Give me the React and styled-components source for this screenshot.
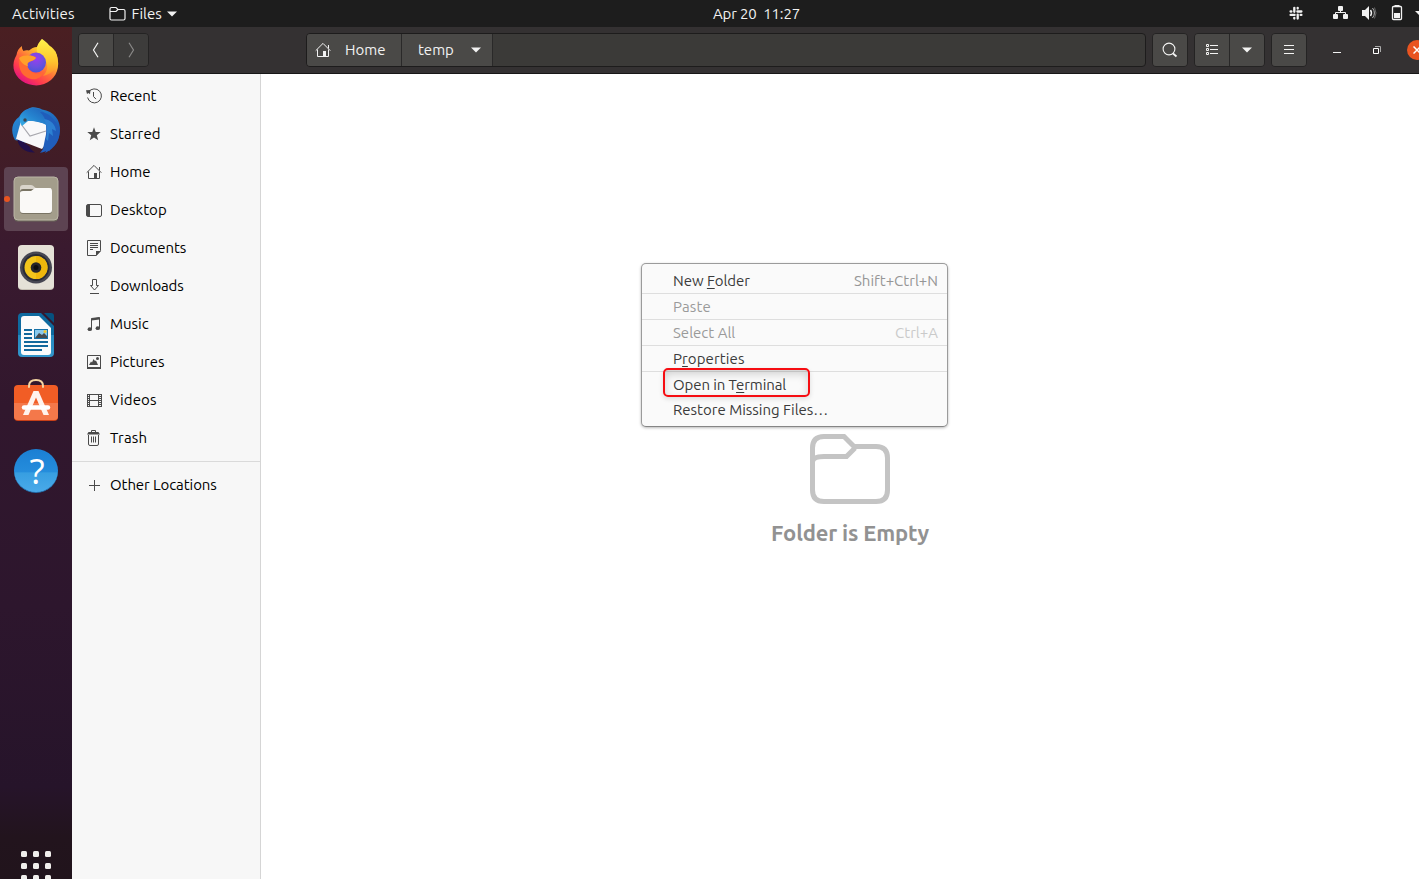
import React from "react";
import styled, { createGlobalStyle } from "styled-components";

const GlobalStyle = createGlobalStyle`
  * { box-sizing: border-box; }
  html, body { margin: 0; overflow: hidden; }
  body { font-family: Ubuntu, "Noto Sans", sans-serif; font-size: 15px; background: #fff; }
  svg { display: block; flex: none; }
`;

const Screen = styled.div`
  width: 1419px;
  height: 879px;
  display: flex;
  flex-direction: column;
  overflow: hidden;
  position: relative;
`;

const Text = styled.span`
  white-space: pre;
  letter-spacing: ${(p) => p.$ls || 0}px;
`;

const Label = styled(Text)`
  padding-bottom: 2px;
`;

const TopBar = styled.header`
  height: 27px;
  flex: none;
  background: #1d1d1d;
  color: #f2f2f2;
  display: grid;
  grid-template-columns: 1fr auto 1fr;
  align-items: center;
`;

const TopLeft = styled.div`
  display: flex;
  align-items: center;
  padding-left: 12px;
`;

const AppMenu = styled.div`
  display: flex;
  align-items: center;
  gap: 5px;
  margin-left: 34px;
`;

const Clock = styled.div`
  width: 87px;
  margin-left: 94px;
`;

const Tray = styled.div`
  display: flex;
  align-items: center;
  justify-content: flex-end;
`;

const Body = styled.div`
  flex: 1;
  min-height: 0;
  display: flex;
`;

const Dock = styled.nav`
  width: 72px;
  flex: none;
  display: flex;
  flex-direction: column;
  align-items: center;
  gap: 4px;
  padding-top: 4px;
  overflow: hidden;
  background: linear-gradient(#4a1f22 0, #421d26 120px, #3a1a2f 220px, #31172d 380px, #2d162d 580px, #26142a 760px, #22141d 810px, #21141c 100%);
`;

const DockItem = styled.div`
  width: 64px;
  height: 64px;
  flex: none;
  border-radius: 4px;
  background: ${(p) => (p.$active ? "#5d4352" : "transparent")};
`;

const AppsGrid = styled.div`
  display: grid;
  grid-template-columns: repeat(3, 6px);
  grid-auto-rows: 6px;
  gap: 6px;
  margin-top: 344px;
`;

const Dot = styled.i`
  background: #f1efec;
  border-radius: 1.5px;
`;

const Window = styled.section`
  width: 1367px;
  flex: none;
  display: flex;
  flex-direction: column;
`;

const HeaderBar = styled.div`
  height: 47px;
  flex: none;
  display: flex;
  align-items: center;
  padding: 0 12px 0 6px;
  background: #343132;
  border-bottom: 1px solid #171717;
  color: #f2f2f2;
`;

const ButtonGroup = styled.div`
  display: flex;
  height: 34px;
  border: 1px solid #242323;
  border-radius: 4px;
  overflow: hidden;
  margin-left: ${(p) => p.$ml || 0}px;
`;

const HeaderButton = styled.div`
  width: ${(p) => p.$w || 34}px;
  display: flex;
  align-items: center;
  justify-content: center;
  background: ${(p) => (p.$dim ? "#3d3c3b" : "#4a4947")};
  color: ${(p) => (p.$dim ? "#898887" : "#f4f4f3")};
  & + & { border-left: 1px solid #282727; }
`;

const PathBar = styled.div`
  width: 840px;
  height: 34px;
  margin-left: 157px;
  flex: none;
  display: flex;
  overflow: hidden;
  background: #3b3a38;
  border: 1px solid #1d1c1c;
  border-radius: 4px;
`;

const Crumb = styled.div`
  display: flex;
  align-items: center;
  gap: ${(p) => p.$gap}px;
  width: ${(p) => p.$w}px;
  padding-left: ${(p) => p.$pl}px;
  background: #4a4947;
  border-right: 1px solid #2a2929;
`;

const WindowControls = styled.div`
  display: flex;
  align-items: center;
  gap: 24px;
  margin-left: 22px;
`;

const Panes = styled.div`
  flex: 1;
  min-height: 0;
  display: flex;
`;

const Sidebar = styled.aside`
  width: 189px;
  flex: none;
  background: #f7f7f7;
  border-right: 1px solid #d5d5d5;
  padding-top: 3px;
  color: #000;
`;

const Place = styled.div`
  display: flex;
  align-items: center;
  gap: 8px;
  height: 38px;
  padding-left: 14px;
  svg { color: #4a4a4a; }
`;

const Divider = styled.div`
  height: 1px;
  margin: 4px 0;
  background: #dadada;
`;

const Content = styled.main`
  flex: 1;
  background: #fff;
  display: flex;
  flex-direction: column;
  align-items: center;
  padding-top: 360px;
`;

const EmptyTitle = styled.h2`
  margin: 14px 0 0;
  font-size: 22px;
  line-height: 30px;
  font-weight: 700;
  color: #929292;
  letter-spacing: -0.18px;
  white-space: nowrap;
`;

const ContextMenu = styled.div`
  position: absolute;
  left: 641px;
  top: 263px;
  width: 307px;
  height: 164px;
  padding: 4px 0;
  background: #fafafa;
  border: 1px solid #9b9b9b;
  border-bottom-color: #858585;
  border-radius: 5px;
  box-shadow: 0 1px 3px rgba(0, 0, 0, 0.28);
`;

const MenuRow = styled.div`
  display: flex;
  align-items: center;
  justify-content: space-between;
  height: ${(p) => (p.$line ? 26 : 25)}px;
  padding: 1px 9px 0 31px;
  border-bottom: ${(p) => (p.$line ? "1px solid #dedede" : "0")};
  color: ${(p) => (p.$off ? "#9a9a9a" : "#3b3b3b")};
  u { text-underline-offset: 2px; text-decoration-thickness: 1px; text-decoration-skip-ink: none; }
`;

const Shortcut = styled(Label)`
  color: ${(p) => (p.$off ? "#cacaca" : "#969696")};
`;

const Highlight = styled.div`
  position: absolute;
  left: 21px;
  top: 104px;
  width: 147px;
  height: 29px;
  border: 2px solid #f60d12;
  border-radius: 5px;
  box-shadow: inset 0 4px 8px rgba(0, 0, 0, 0.17), 0 2px 5px rgba(0, 0, 0, 0.12);
`;

const Caret = ({ w = 10 }) => (
  <svg width={w} height="6" viewBox="0 0 10 6"><path d="M0 .5h10L5 5.5z" fill="currentColor" /></svg>
);

const HomeIcon = () => (
  <svg width="16" height="16" viewBox="0 0 16 16" fill="none" stroke="currentColor">
    <path d="M.7 8.7 8 1.4l7.3 7.3M2.5 7.5v7h11v-7M13.5 3v3.5" />
    <path d="M8 9h3v6H8z" fill="currentColor" stroke="none" />
  </svg>
);

const placeIcons = {
  recent: (
    <>
      <path d="M2.6 4a7 7 0 1 1-1 5.5" />
      <path d="M7.5 4v4.5l2.5 2.6" />
      <path d="M0 2.2 4.5 2 4 6.2 2.5 5 1 6z" fill="currentColor" stroke="none" />
    </>
  ),
  star: <path d="m8 1.2 1.7 4.7 5 .2-3.900 3.200 1.400 4.900L8 11.600l-4.200 2.600 1.400-4.900L1.300 6.100l5-.2z" fill="currentColor" stroke="none" />,
  desktop: (
    <>
      <rect x=".5" y="2.5" width="15" height="12" rx="1.5" />
      <path d="M1 3h3v11H1z" fill="currentColor" stroke="none" />
    </>
  ),
  documents: (
    <>
      <path d="M1.5.5h13v10.2l-4.3 4.8H1.5z" />
      <path d="M4 3.5h8M4 5.5h8M4 7.5h8M4 9.5h3" />
      <path d="M10 11h5l-5 5z" fill="currentColor" stroke="none" />
    </>
  ),
  downloads: <path d="M6.500 1.500h4v6h2L8.500 12l-4-4.500h2zM4 15.500h9" />,
  music: (
    <>
      <path d="M5.500 13V2.500l8-1V12M5.500 3.200l8-1" />
      <path d="M5.500 2.500l8-1v2l-8 1z" fill="currentColor" stroke="none" />
      <ellipse cx="3.800" cy="13.200" rx="2.200" ry="1.900" fill="currentColor" stroke="none" />
      <ellipse cx="11.800" cy="12.200" rx="2.200" ry="1.900" fill="currentColor" stroke="none" />
    </>
  ),
  pictures: (
    <>
      <path d="M1.500 1.500h13v12h-13z" />
      <path d="M1 13h14v2H1zM3 11l2-3.500 1 1L7.500 5 9 7l1-.5 2 4.500z" fill="currentColor" stroke="none" />
      <circle cx="11.500" cy="4.500" r="1.500" fill="currentColor" stroke="none" />
    </>
  ),
  videos: (
    <>
      <path d="M3.500 2v13M12.500 2v13M3.500 2.500h9M3.500 8.500h9M3.500 14.500h9M15.500 2v13M1.500 2v13" />
      <path d="M2.500 2v13M14 2v13" strokeDasharray="1 1" strokeWidth="2" />
    </>
  ),
  trash: (
    <>
      <path d="M2.500 5v9q0 1.500 1.500 1.500h7q1.500 0 1.500-1.500V5M5.500 6.500v6M7.500 6.500v6M9.500 6.500v6M5.500 2V.5h4V2" />
      <path d="M2.500 2h10l1.500 2.500H1z" fill="currentColor" stroke="none" />
    </>
  ),
  plus: <path d="M3 8.500h11M8.500 3v11" />,
};

const PlaceIcon = ({ name }) =>
  name === "home" ? <HomeIcon /> : (
    <svg width="16" height="16" viewBox="0 0 16 16" fill="none" stroke="currentColor">{placeIcons[name]}</svg>
  );

const places = [
  ["recent", "Recent", -0.15],
  ["star", "Starred", 0.12],
  ["home", "Home", 0],
  ["desktop", "Desktop", 0.05],
  ["documents", "Documents", -0.1],
  ["downloads", "Downloads", -0.2],
  ["music", "Music", 0],
  ["pictures", "Pictures", 0],
  ["videos", "Videos", 0.1],
  ["trash", "Trash", 0.2],
];

const DockSvg = ({ children }) => <svg width="64" height="64" viewBox="0 0 64 64">{children}</svg>;

const Firefox = () => (
  <DockSvg>
    <defs>
      <linearGradient id="ffBody" x1=".85" y1=".1" x2=".25" y2=".95">
        <stop offset="0" stopColor="#fff44f" /><stop offset=".3" stopColor="#ffbd2e" />
        <stop offset=".55" stopColor="#ff7139" /><stop offset=".8" stopColor="#ff3a4f" /><stop offset="1" stopColor="#e3157f" />
      </linearGradient>
      <radialGradient id="ffGlobe" cx=".5" cy=".3" r=".7">
        <stop offset="0" stopColor="#9a3df0" /><stop offset=".6" stopColor="#6b50e0" /><stop offset="1" stopColor="#4a55d8" />
      </radialGradient>
      <linearGradient id="ffTail" x1=".5" y1="0" x2=".5" y2="1">
        <stop offset="0" stopColor="#fff24a" /><stop offset=".6" stopColor="#ffc52e" /><stop offset="1" stopColor="#ff8a2b" />
      </linearGradient>
    </defs>
    <path d="M18 15c-.3 2 .3 3.500 1.500 5 2-1 3.500-.8 5.500-.4 2-2 5-3.600 8-3.600l5-8c6 4 9 8 11.500 13l1.500-1c6 12 3 23-4 29-8 7-20 7-29 1C8 43 7.500 32 12.500 24c.5-4 2.500-7 5.500-9z" fill="url(#ffBody)" />
    <path d="M38 8c-4 4-6.500 9-4.500 14 2 4 8 5 9.500 11 1 5-1 9-4 12 10-2 15-9 14.500-18-.7-6-4.500-11-9.500-13-2.500-1-4.500-3-6-6z" fill="url(#ffTail)" />
    <circle cx="32" cy="31.500" r="10" fill="url(#ffGlobe)" />
    <path d="M15 27c5-4 14-3 17-.3-1 2-3 2.700-6 3.700-4 1.300-3 6 0 9 4 4 9 4 14 1-2 7-10 10-17 6-6-3-9-10-8-19.400z" fill="#ff6a32" />
    <path d="M15 27c5-4 14-3 17-.3-1 2-3 2.700-6 3.700-3 1-2.800 3-1.800 5C18 33 17 31 15 27z" fill="#ffa12a" />
  </DockSvg>
);

const Thunderbird = () => (
  <DockSvg>
    <defs>
      <linearGradient id="tbBlue" x1="0" y1="0" x2="1" y2="1">
        <stop offset="0" stopColor="#2a8fdc" /><stop offset=".4" stopColor="#2277c5" /><stop offset="1" stopColor="#1c48a8" />
      </linearGradient>
      <linearGradient id="tbHead" x1="0" y1="1" x2="1" y2="0">
        <stop offset="0" stopColor="#37b0e8" /><stop offset=".5" stopColor="#2583cf" /><stop offset="1" stopColor="#1f5fb8" />
      </linearGradient>
    </defs>
    <path d="M24 10c4-3 10-1.500 14 .5 12 1.500 19 11 18 22-1 9-5 14-9 17l-2 3 0-2-7 3 3-5-8-2L11 41c-5-9-3-18 4-23 2-4 5-7 9-8z" fill="url(#tbBlue)" />
    <path d="M13 39c1 9 8 15 18 14.500-3-2-5-4-5.500-6z" fill="#21104a" />
    <path d="m17 22-5 18 26 10 5-7-1-18-12-3z" fill="#f8f8fa" />
    <path d="m17 25 9 12 16-5" fill="none" stroke="#a7a7ae" strokeWidth="1.200" />
    <path d="M24 10c8-3 17 1 19 9l-1 7c-5-4-13-4-18-4l-6 5c-5-8-1-14 6-17z" fill="url(#tbHead)" />
    <path d="M36 13c7 6 8 16 5 27l-2 10-3 4 6-2-1 2c10-5 16-13 14-24-3-9-10-17-19-17z" fill="#205dbb" />
    <path d="M40 20c7 1 11 5 12 12l-4-2 1 7-4-3-1 8-2-2c2-7 1-14-2-20z" fill="#2c80d2" />
    <circle cx="21" cy="21" r="1.700" fill="#3c4650" />
  </DockSvg>
);

const FilesApp = () => (
  <DockSvg>
    <rect x="10" y="10" width="44" height="44.500" rx="4" fill="#6c685b" />
    <rect x="10" y="10" width="44" height="43" rx="4" fill="#a39d8b" stroke="#bbb6a6" />
    <path d="M16 21q0-3 3-3h8q2 0 3 1.500t3 1.500h14v10H16z" fill="#d9d4cb" />
    <rect x="16" y="22" width="32" height="25" rx="3" fill="#797464" />
    <path d="M16 26q0-2 3-2h8l4-3h14q3 0 3 3v19q0 3-3 3H19q-3 0-3-3z" fill="#faf9f7" />
    <circle cx="3" cy="32" r="3" fill="#e95420" />
  </DockSvg>
);

const Rhythmbox = () => (
  <DockSvg>
    <rect x="14" y="11" width="36" height="44" rx="4" fill="#c5bfb3" />
    <rect x="14" y="10" width="36" height="44" rx="4" fill="#e5e1d7" />
    <circle cx="32" cy="32.500" r="16" fill="#474752" />
    <circle cx="32" cy="32.500" r="13.500" fill="#292b36" />
    <circle cx="32" cy="32.500" r="11.500" fill="#f2c51c" />
    <path d="M32 21a11.500 11.500 0 0 1 0 23z" fill="#eeb70c" />
    <circle cx="32" cy="32.500" r="5.300" fill="#25252a" />
    <circle cx="32" cy="32.500" r="2.500" fill="#0d0d0f" />
  </DockSvg>
);

const Writer = () => (
  <DockSvg>
    <defs><linearGradient id="writer" x2="0" y2="1"><stop offset=".5" stopColor="#0e6a9f" /><stop offset=".5" stopColor="#2589bf" /><stop offset="1" stopColor="#3296cb" /></linearGradient></defs>
    <path d="M18 10h19l13 13v27q0 4-4 4H18q-4 0-4-4V14q0-4 4-4z" fill="url(#writer)" />
    <path d="M40 10h7q3 0 3 3v7z" fill="#06517f" />
    <path d="M20 13h15l12 12v24q0 3-3 3H20q-3 0-3-3V16q0-3 3-3z" fill="#fbfbfb" />
    <path d="M20 27h8M20 31h8M20 35h8M20 39h24M20 43h24M20 47h18" stroke="#12689c" strokeWidth="2" />
    <path d="M30 26h14v10H30z" fill="#1672a8" /><path d="M31 27h12v8H31z" fill="#8acaed" />
    <path d="m31 35 4-5 3 2 2-2 3 3v2z" fill="#454b50" /><circle cx="41" cy="28.500" r="1.500" fill="#f2c62b" />
  </DockSvg>
);

const Software = () => (
  <DockSvg>
    <rect x="10" y="15" width="44" height="35" rx="4" fill="#c84018" />
    <rect x="10" y="14" width="44" height="35" rx="4" fill="#f15d25" />
    <path d="M10 32h44v13q0 4-4 4H14q-4 0-4-4z" fill="#f4784a" />
    <path d="M25 16v-1q0-6 7-6t7 6v1" fill="none" stroke="#f5d5a2" strokeWidth="2" strokeLinecap="round" />
    <path d="M29.500 20h5L45 44h-5.500L32 26.500 24.500 44H19z" fill="#fff3ed" />
    <path d="M20 36.500h24" stroke="#fff" strokeWidth="4.500" strokeLinecap="round" />
  </DockSvg>
);

const HelpMark = styled.div`
  width: 44px;
  height: 44px;
  margin: 10px;
  border-radius: 50%;
  border-bottom: 1px solid #2272b2;
  background: linear-gradient(#1b7fd3, #258ddc 54%, #379ee1 55%, #4aaae9);
  color: #fff;
  font: 400 35px/43px "Open Sans", sans-serif;
  text-align: center;
`;

const HelpGlyph = styled.span`
  display: inline-block;
  padding-left: 2px;
`;

const Help = () => <HelpMark><HelpGlyph>?</HelpGlyph></HelpMark>;

const dockApps = [Firefox, Thunderbird, FilesApp, Rhythmbox, Writer, Software, Help];

const CloseButton = styled.div`
  width: 20px;
  height: 20px;
  margin-left: -2px;
  border-radius: 50%;
  background: #e95420;
  display: flex;
  align-items: center;
  justify-content: center;
`;

const TrayIcons = () => (
  <svg width="135" height="20" viewBox="1284 4 135 20" fill="none" stroke="#f2f2f2">
    <g strokeWidth="2.300" strokeLinecap="round" transform="translate(1296 13.200)">
      {[0, 90, 180, 270].map((a) => (
        <g key={a} transform={`rotate(${a})`}>
          <path d="M-1.700 -5.400v4" />
          <path d="M-5.400 -1.700h.8" />
        </g>
      ))}
    </g>
    <g fill="#f2f2f2" stroke="none">
      <rect x="1338" y="6" width="5" height="5" rx="1" />
      <rect x="1333" y="14" width="5" height="5" rx="1" />
      <rect x="1343" y="14" width="5" height="5" rx="1" />
    </g>
    <path d="M1340.500 10v3M1335.500 15v-2.500h10v2.500" />
    <path d="M1362 10h3l4-4v14l-4-4h-3z" fill="#f2f2f2" stroke="none" />
    <path d="M1370.500 10q2 3 0 6" strokeWidth="1.400" />
    <path d="M1372.500 8q3.800 5 0 10" stroke="#b2b2b2" />
    <path d="M1374.500 7.500q3 5.500 0 11" stroke="#666" />
    <rect x="1392.500" y="6.500" width="9" height="13" rx="1" strokeWidth="1.300" />
    <path d="M1394.500 5h5v1h-5zM1394 13h6v5h-6z" fill="#f2f2f2" stroke="none" />
    <path d="M1415 11h10l-5 5z" fill="#f2f2f2" stroke="none" />
  </svg>
);

export default function App() {
  return (
    <>
      <GlobalStyle />
      <Screen>
        <TopBar>
          <TopLeft>
            <Text $ls={0.1}>Activities</Text>
            <AppMenu>
              <svg width="18" height="16" viewBox="0 0 18 16" fill="none" stroke="currentColor" strokeWidth="1.200">
                <path d="M1 5V3q0-1.500 1.500-1.500H7l2 2h5.500Q16 3.500 16 5v7.500q0 1.500-1.500 1.500h-12Q1 14 1 12.500V5.500h6l2-2" />
              </svg>
              <Text>Files</Text>
              <Caret />
            </AppMenu>
          </TopLeft>
          <Clock><Text $ls={-0.15}>Apr 20  11:27</Text></Clock>
          <Tray><TrayIcons /></Tray>
        </TopBar>
        <Body>
          <Dock>
            {dockApps.map((Icon, i) => <DockItem key={i} $active={i === 2}><Icon /></DockItem>)}
            <AppsGrid>{Array.from({ length: 9 }, (_, i) => <Dot key={i} />)}</AppsGrid>
          </Dock>
          <Window>
            <HeaderBar>
              <ButtonGroup>
                <HeaderButton>
                  <svg width="8" height="16" viewBox="0 0 8 16" fill="none" stroke="currentColor" strokeWidth="1.200"><path d="M6 .8 1.500 8 6 15.200" /></svg>
                </HeaderButton>
                <HeaderButton $dim $w={35}>
                  <svg width="8" height="16" viewBox="0 0 8 16" fill="none" stroke="currentColor" strokeWidth="1.200"><path d="M2 .8 6.500 8 2 15.200" /></svg>
                </HeaderButton>
              </ButtonGroup>
              <PathBar>
                <Crumb $w={95} $pl={8} $gap={14}><HomeIcon /><Label>Home</Label></Crumb>
                <Crumb $w={91} $pl={16} $gap={17}><Label>temp</Label><Caret /></Crumb>
              </PathBar>
              <ButtonGroup $ml={6}>
                <HeaderButton>
                  <svg width="16" height="16" viewBox="0 0 16 16" fill="none" stroke="currentColor" strokeWidth="1.100"><circle cx="7" cy="7" r="5.900" /><path d="m11 11.500 3.500 3" strokeWidth="1.800" /></svg>
                </HeaderButton>
              </ButtonGroup>
              <ButtonGroup $ml={6}>
                <HeaderButton>
                  <svg width="12" height="12" viewBox="0 0 12 12" fill="none" stroke="currentColor"><path d="M.5 .5h2v2h-2zM.5 4.500h2v2h-2zM.5 8.500h2v2h-2zM4 1.500h8M4 5.500h8M4 9.500h8" /></svg>
                </HeaderButton>
                <HeaderButton $w={35}><Caret /></HeaderButton>
              </ButtonGroup>
              <ButtonGroup $ml={6}>
                <HeaderButton>
                  <svg width="10" height="10" viewBox="0 0 10 10" stroke="currentColor"><path d="M0 .5h10M0 4.500h10M0 8.500h10" /></svg>
                </HeaderButton>
              </ButtonGroup>
              <WindowControls>
                <svg width="16" height="16" viewBox="0 0 16 16" stroke="currentColor"><path d="M4 10.500h8" /></svg>
                <svg width="16" height="16" viewBox="0 0 16 16" fill="none"><path d="M6 4.500h5.500V10" stroke="#aaa" /><path d="M4.500 6.500h5v5h-5z" stroke="#fff" /></svg>
                <CloseButton>
                  <svg width="8" height="8" viewBox="0 0 8 8" stroke="#fff" strokeWidth="1.500"><path d="m.5.5 7 7m0-7-7 7" /></svg>
                </CloseButton>
              </WindowControls>
            </HeaderBar>
            <Panes>
              <Sidebar>
                {places.map(([icon, label, spacing]) => (
                  <Place key={label}><PlaceIcon name={icon} /><Label $ls={spacing}>{label}</Label></Place>
                ))}
                <Divider />
                <Place><PlaceIcon name="plus" /><Label $ls={-0.08}>Other Locations</Label></Place>
              </Sidebar>
              <Content>
                <svg width="80" height="70" viewBox="0 0 80 70" fill="none" stroke="#c4c4c4" strokeWidth="5">
                  <path d="M2.500 28V14Q2.500 2.500 14 2.500H34L44 12.500H66Q77.500 12.500 77.500 24V56Q77.500 67.500 66 67.500H14Q2.500 67.500 2.500 56V28Q2.500 22.500 14 22.500H36.500L45 14" />
                </svg>
                <EmptyTitle>Folder is Empty</EmptyTitle>
              </Content>
            </Panes>
          </Window>
        </Body>
        <ContextMenu>
          <MenuRow $line><Label $ls={-0.05}>New <u>F</u>older</Label><Shortcut>Shift+Ctrl+N</Shortcut></MenuRow>
          <MenuRow $line $off><Label $ls={0.15}>Paste</Label></MenuRow>
          <MenuRow $line $off><Label>Select All</Label><Shortcut $off>Ctrl+A</Shortcut></MenuRow>
          <MenuRow $line><Label $ls={0.1}>P<u>r</u>operties</Label></MenuRow>
          <MenuRow><Label $ls={-0.1}>Open in T<u>e</u>rminal</Label></MenuRow>
          <MenuRow><Label>Restore Missing Files…</Label></MenuRow>
          <Highlight />
        </ContextMenu>
      </Screen>
    </>
  );
}
